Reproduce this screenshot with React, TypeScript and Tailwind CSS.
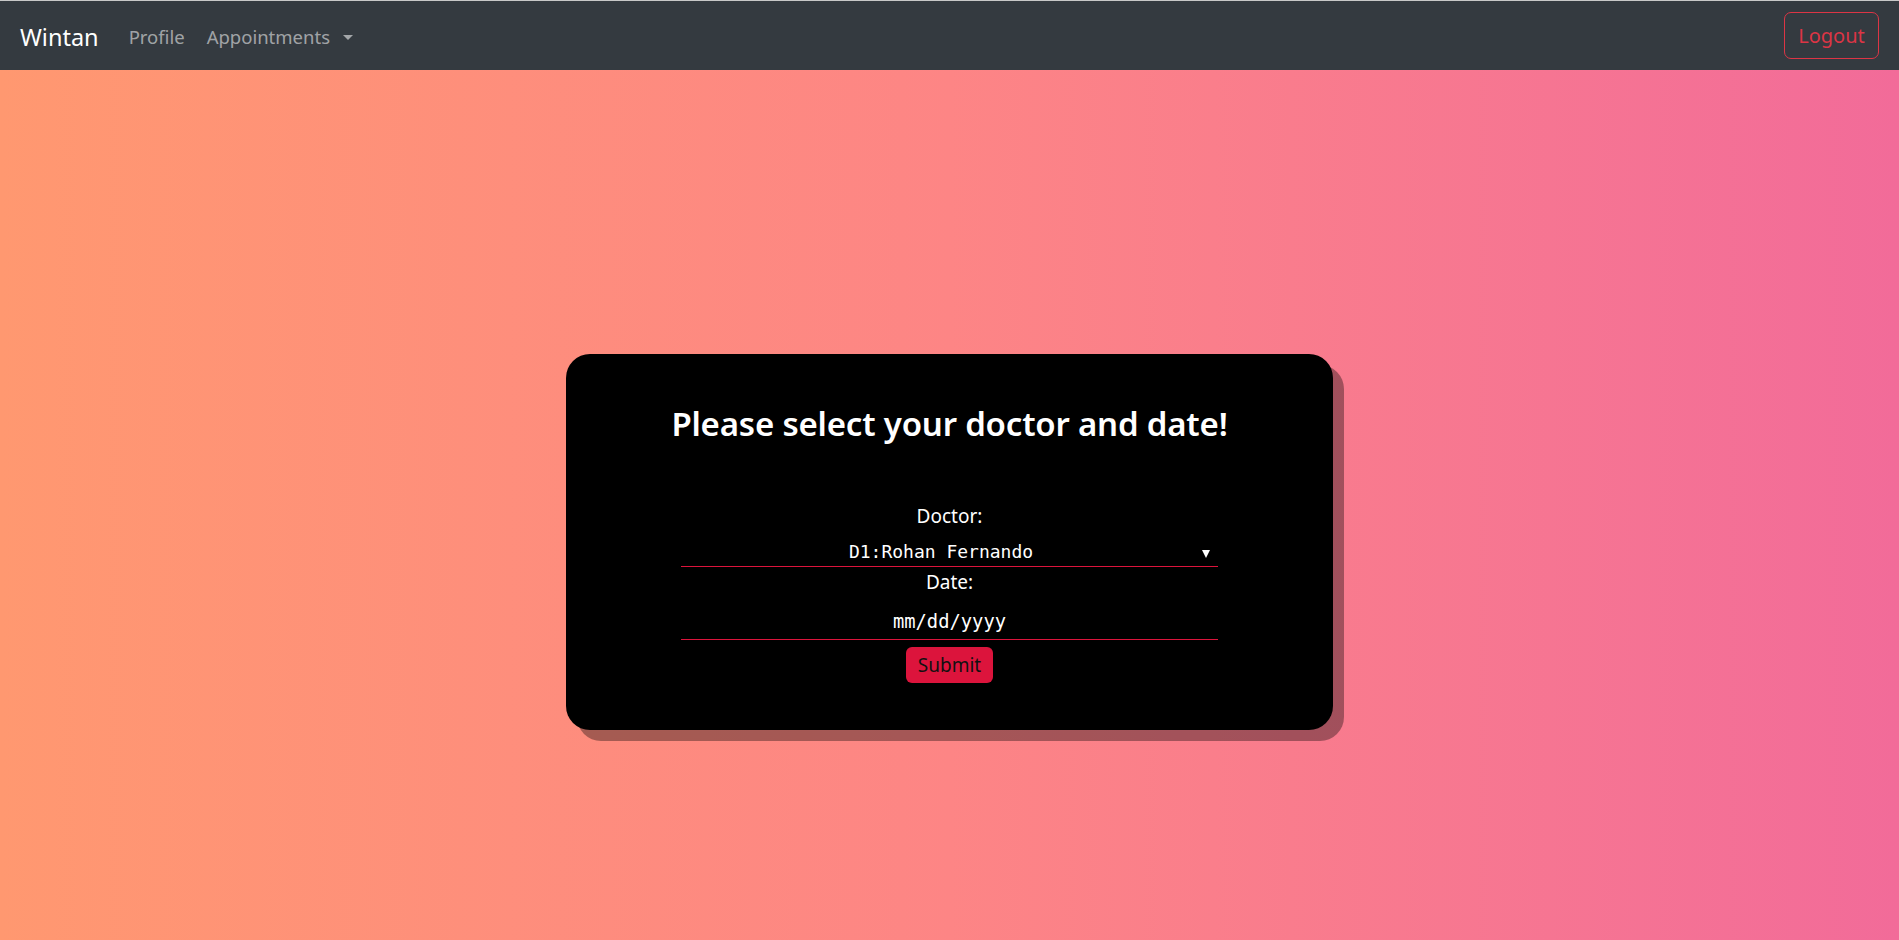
export default function App() {
  const sans = { fontFamily: '"Noto Sans", "Open Sans", sans-serif' };
  const mono = { fontFamily: '"DejaVu Sans Mono", "Liberation Mono", monospace' };
  return (
    <div className="min-h-[940px] flex flex-col" style={sans}>
      <nav className="h-[70px] bg-[#343a40] border-t border-[#c8c8c8] flex items-center justify-between pl-[20px] pr-[20px]">
        <div className="flex items-center pt-[3px]">
          <span className="text-[23.5px] text-white leading-[30px] mr-[30px]">Wintan</span>
          <span className="text-[18.5px] text-[#ffffff8c] leading-[26px] mr-[22px]">Profile</span>
          <span className="text-[18.5px] text-[#ffffff8c] leading-[26px] flex items-center">
            Appointments
            <span className="ml-[13px] w-0 h-0 border-l-[5px] border-r-[5px] border-t-[5px] border-l-transparent border-r-transparent border-t-[#ffffff8c]" />
          </span>
        </div>
        <button className="w-[95px] h-[47px] border border-[#dc3545] rounded-[7px] text-[#dc3545] text-[20px] leading-[30px] flex items-center justify-center">
          Logout
        </button>
      </nav>
      <main className="flex-1 bg-gradient-to-r from-[#ff9870] via-[#fd8585] to-[#f26b99] flex justify-center pt-[284px]">
        <div className="w-[767px] h-[376px] bg-black rounded-[24px] shadow-[11px_11px_0_rgba(0,0,0,0.35)] flex flex-col items-center pt-[51px]">
          <h2 className="text-[33px] font-semibold text-white leading-[38px] tracking-[-0.2px]">
            Please select your doctor and date!
          </h2>
          <div className="mt-[61px] text-[19px] text-white leading-[24px]">Doctor:</div>
          <div className="w-[537px] h-[39px] border-b border-[#dc143c] relative flex justify-center pt-[12px]">
            <span className="text-[18px] text-white leading-[24px] mr-[17px]" style={mono}>
              D1:Rohan Fernando
            </span>
            <span className="absolute right-[8px] top-[22px] w-0 h-0 border-l-[4px] border-r-[4px] border-t-[8px] border-l-transparent border-r-transparent border-t-white" />
          </div>
          <div className="mt-[3px] text-[19px] text-white leading-[24px]">Date:</div>
          <div className="w-[537px] h-[46px] border-b border-[#dc143c] flex justify-center pt-[16px]">
            <span className="text-[18.8px] text-white leading-[24px]" style={mono}>
              mm/dd/yyyy
            </span>
          </div>
          <button className="mt-[7px] w-[87px] h-[36px] bg-[#dc143c] rounded-[6px] text-[19px] text-[#111] leading-[24px]">
            Submit
          </button>
        </div>
      </main>
    </div>
  );
}
